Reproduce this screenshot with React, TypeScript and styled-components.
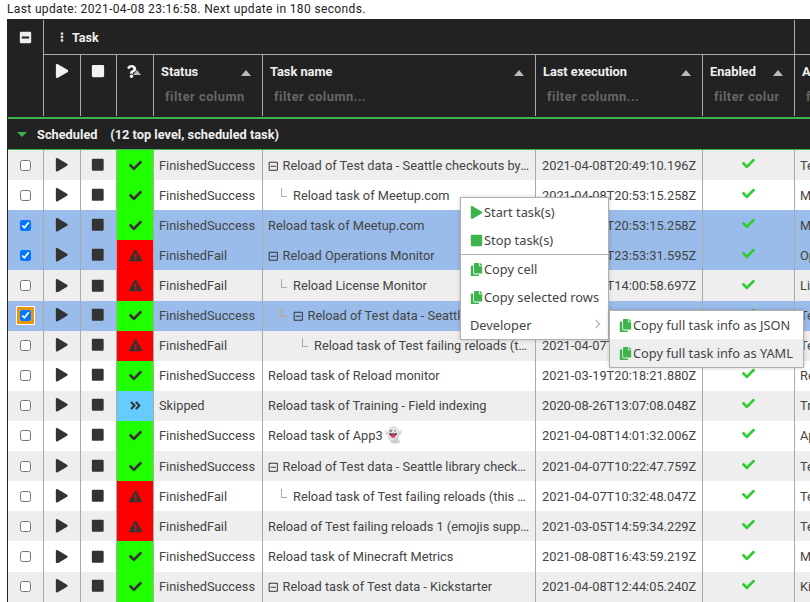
import React from 'react'
import styled, { createGlobalStyle } from 'styled-components'
import {
  FaPlay,
  FaStop,
  FaCheck,
  FaExclamationTriangle,
  FaAngleDoubleRight,
  FaCopy,
  FaRegMinusSquare,
  FaMinusSquare,
  FaQuestion,
  FaEllipsisV,
  FaSquare,
} from 'react-icons/fa'

const COLUMNS = '36px 37px 36px 37px 109px 273px 167px 92px 200px'
const GREEN = '#3cb44b'

const GlobalStyle = createGlobalStyle`
  html, body {
    margin: 0;
    height: 602px;
    overflow: hidden;
    background: #fff;
  }
  body {
    font-family: Roboto, "Liberation Sans", sans-serif;
    color: #333;
  }
`

const Page = styled.div`
  position: relative;
  width: 810px;
  height: 602px;
  overflow: hidden;
  padding-left: 7px;
  box-sizing: border-box;
`

const UpdateLine = styled.div`
  height: 19px;
  line-height: 19px;
  font-size: 12px;
  letter-spacing: 0.36px;
  white-space: nowrap;
  color: #222;
`

const Table = styled.div`
  width: 1000px;
  border-left: 1px solid #222;
`

const Header = styled.div`
  display: grid;
  grid-template-columns: ${COLUMNS};
  grid-template-rows: 35px 61px;
  padding: 1px 0;
  background: #222;
  border-bottom: 2px solid ${GREEN};
  color: #efefef;
`

const CornerCell = styled.div`
  grid-row: 1 / 3;
  border-right: 1px solid #aaa;
  display: flex;
  justify-content: center;
  padding-top: 11px;
  padding-right: 1px;
  font-size: 13px;
  color: #eee;
`

const GroupTitle = styled.div<{ $span: string }>`
  grid-column: ${(p) => p.$span};
  border-bottom: 1px solid #aaa;
  border-right: 1px solid #aaa;
  display: flex;
  align-items: center;
  gap: 5px;
  padding-left: 13px;
  font-size: 12.5px;
  font-weight: 700;
  svg {
    font-size: 10px;
    color: #ddd;
  }
`

const HeadCell = styled.div`
  position: relative;
  border-right: 1px solid #aaa;
  padding: 10px 11px 0 7px;
  box-sizing: border-box;
  min-width: 0;
`

const IconHead = styled.div`
  position: relative;
  border-right: 1px solid #aaa;
  display: flex;
  justify-content: center;
  padding-top: 9px;
  padding-right: 1px;
  height: 61px;
  box-sizing: border-box;
  color: #f2f2f2;
  font-size: 14px;
`

const QuestionHead = styled(IconHead)`
  justify-content: flex-start;
  padding-left: 8px;
  padding-top: 10px;
  font-size: 13px;
`

const HeadTitle = styled.div`
  font-size: 12.8px;
  font-weight: 700;
  line-height: 14px;
  white-space: nowrap;
`

const SortArrow = styled.span`
  position: absolute;
  top: 15px;
  right: 11px;
  width: 0;
  height: 0;
  border-left: 5.5px solid transparent;
  border-right: 5.5px solid transparent;
  border-bottom: 6px solid #bbb;
`

const QuestionArrow = styled(SortArrow)`
  right: auto;
  left: 16px;
  border-left-width: 4.5px;
  border-right-width: 4.5px;
  border-bottom-width: 5px;
`

const Filter = styled.input`
  display: block;
  width: 100%;
  margin: 5px 0 0;
  padding: 0 4px;
  box-sizing: border-box;
  height: 24px;
  border: 0;
  background: transparent;
  font: 700 12.8px Roboto, sans-serif;
  letter-spacing: 0.5px;
  color: #ccc;
  &::placeholder {
    color: #666;
    opacity: 1;
  }
`

const GroupRow = styled.div`
  height: 30px;
  background: #222;
  border-bottom: 1px solid ${GREEN};
  display: flex;
  align-items: center;
  padding-left: 9px;
  font-size: 12.8px;
  font-weight: 700;
  color: #efefef;
  white-space: pre;
`

const GroupArrow = styled.span`
  width: 0;
  height: 0;
  margin-right: 10px;
  border-top: 5px solid ${GREEN};
  border-left: 5px solid transparent;
  border-right: 5px solid transparent;
`

const Row = styled.div<{ $bg: string; $tall?: boolean; $lift?: boolean }>`
  --lift: ${(p) => (p.$lift ? 2 : 0)}px;
  display: grid;
  grid-template-columns: ${COLUMNS};
  height: ${(p) => (p.$tall ? 31 : 30)}px;
  background: ${(p) => p.$bg};
`

const Cell = styled.div`
  border-right: 1px solid #aaa;
  display: flex;
  align-items: center;
  min-width: 0;
  padding: 0 5px var(--lift);
  font-size: 12.8px;
  color: #444;
  white-space: nowrap;
  overflow: hidden;
`

const CenterCell = styled(Cell)`
  justify-content: center;
  padding: 0 1px var(--lift) 0;
`

const IconCell = styled(CenterCell)`
  color: #333;
  font-size: 13.5px;
`

const StatusCell = styled(CenterCell)<{ $bg: string }>`
  background: ${(p) => p.$bg};
  color: #333;
  font-size: 13px;
  padding: 0 0 var(--lift);
`

const EnabledCell = styled(CenterCell)`
  color: #2ecc2e;
  font-size: 13px;
  padding-bottom: calc(3px + var(--lift));
`

const DateCell = styled(Cell)`
  padding-left: 6px;
`

const Check = styled.input<{ $focused?: boolean }>`
  margin: 0;
  width: 11px;
  height: 11px;
  ${(p) =>
    p.$focused
      ? 'box-shadow: 0 0 0 3px #e8960c, 0 0 0 4px #fff; border-radius: 3px;'
      : ''}
`

const NameWrap = styled.div<{ $indent: number }>`
  display: flex;
  align-items: center;
  min-width: 0;
  margin-left: ${(p) => p.$indent}px;
`

const NameText = styled.span`
  overflow: hidden;
  text-overflow: ellipsis;
  white-space: nowrap;
  min-width: 0;
`

const Branch = styled.span<{ $color: string }>`
  flex: none;
  width: 5px;
  height: 8px;
  margin: -5px 6px 0 0;
  border-left: 1px solid ${(p) => p.$color};
  border-bottom: 1px solid ${(p) => p.$color};
`

const TreeToggle = styled.span`
  flex: none;
  display: inline-flex;
  margin-right: 4px;
  font-size: 10.5px;
  color: #333;
  padding-top: 2px;
`

const Menu = styled.div<{ $left: number; $top: number; $width: number }>`
  position: absolute;
  left: ${(p) => p.$left}px;
  top: ${(p) => p.$top}px;
  width: ${(p) => p.$width}px;
  box-sizing: border-box;
  background: #fff;
  border: 1px solid #b0b0b0;
  box-shadow: 0 0 4px rgba(0, 0, 0, 0.2);
  font-family: "Noto Sans", sans-serif;
  font-size: 12.8px;
  color: #444;
`

const MenuItem = styled.div<{ $hover?: boolean }>`
  position: relative;
  height: 28px;
  display: flex;
  align-items: center;
  padding-left: 9px;
  white-space: nowrap;
  background: ${(p) => (p.$hover ? '#eee' : 'transparent')};
  svg {
    flex: none;
    color: ${GREEN};
    font-size: 13px;
    margin-right: 1px;
  }
`

const MenuDivider = styled.div`
  height: 1px;
  background: #b0b0b0;
`

const Chevron = styled.span`
  position: absolute;
  right: 9px;
  top: 10px;
  width: 5px;
  height: 5px;
  border-top: 1px solid #aaa;
  border-right: 1px solid #aaa;
  transform: rotate(45deg);
`

const Ghost = styled.span`
  font-family: "Noto Color Emoji", Roboto, sans-serif;
  font-size: 15px;
  margin-left: 2px;
`

type Task = {
  status: 'ok' | 'fail' | 'skip'
  name: string
  level?: number
  toggle?: boolean
  date: string
  app: string
  selected?: boolean
  focused?: boolean
  grey?: boolean
  tall?: boolean
  lift?: boolean
  ghost?: boolean
}

const tasks: Task[] = [
  { status: 'ok', name: 'Reload of Test data - Seattle checkouts by title', toggle: true, date: '2021-04-08T20:49:10.196Z', app: 'Test data', grey: true },
  { status: 'ok', name: 'Reload task of Meetup.com', level: 1, date: '2021-04-08T20:53:15.258Z', app: 'Meetup.com' },
  { status: 'ok', name: 'Reload task of Meetup.com', date: '2021-04-08T20:53:15.258Z', app: 'Meetup.com', selected: true },
  { status: 'fail', name: 'Reload Operations Monitor', toggle: true, date: '2021-04-08T23:53:31.595Z', app: 'Operations', selected: true },
  { status: 'fail', name: 'Reload License Monitor', level: 1, date: '2021-04-08T14:00:58.697Z', app: 'License', grey: true, tall: true },
  { status: 'ok', name: 'Reload of Test data - Seattle library checkouts', level: 1, toggle: true, date: '2021-04-08T20:49:10.196Z', app: 'Test data', selected: true, focused: true, lift: true },
  { status: 'fail', name: 'Reload task of Test failing reloads (this one will fail)', level: 2, date: '2021-04-07T10:32:48.047Z', app: 'Test', grey: true, lift: true },
  { status: 'ok', name: 'Reload task of Reload monitor', date: '2021-03-19T20:18:21.880Z', app: 'Reload', lift: true },
  { status: 'skip', name: 'Reload task of Training - Field indexing', date: '2020-08-26T13:07:08.048Z', app: 'Training', grey: true, lift: true },
  { status: 'ok', name: 'Reload task of App3', ghost: true, date: '2021-04-08T14:01:32.006Z', app: 'App3', lift: true },
  { status: 'ok', name: 'Reload of Test data - Seattle library checkouts', toggle: true, date: '2021-04-07T10:22:47.759Z', app: 'Test data', grey: true },
  { status: 'fail', name: 'Reload task of Test failing reloads (this one will fail)', level: 1, date: '2021-04-07T10:32:48.047Z', app: 'Test' },
  { status: 'fail', name: 'Reload of Test failing reloads 1 (emojis supported)', date: '2021-03-05T14:59:34.229Z', app: 'Test', grey: true },
  { status: 'ok', name: 'Reload task of Minecraft Metrics', date: '2021-08-08T16:43:59.219Z', app: 'Minecraft', tall: true },
  { status: 'ok', name: 'Reload task of Test data - Kickstarter', toggle: true, date: '2021-04-08T12:44:05.240Z', app: 'Kickstarter', grey: true, lift: true },
]

const statusLabel = { ok: 'FinishedSuccess', fail: 'FinishedFail', skip: 'Skipped' }
const statusColor = { ok: '#1fff00', fail: '#ff0000', skip: '#66ccff' }

function StatusIcon({ status }: { status: Task['status'] }) {
  if (status === 'ok') return <FaCheck />
  if (status === 'fail') return <FaExclamationTriangle />
  return <FaAngleDoubleRight />
}

function TaskRow({ task }: { task: Task }) {
  const bg = task.selected ? '#9abcea' : task.grey ? '#eeeeee' : '#ffffff'
  const level = task.level || 0
  return (
    <Row $bg={bg} $tall={task.tall} $lift={task.lift}>
      <CenterCell>
        <Check type="checkbox" checked={!!task.selected} readOnly $focused={task.focused} />
      </CenterCell>
      <IconCell><FaPlay /></IconCell>
      <IconCell><FaStop /></IconCell>
      <StatusCell $bg={statusColor[task.status]}><StatusIcon status={task.status} /></StatusCell>
      <Cell>{statusLabel[task.status]}</Cell>
      <Cell>
        <NameWrap $indent={level === 0 ? 0 : level === 1 ? 13 : 34}>
          {level > 0 && <Branch $color={task.selected ? '#c9a36a' : '#aaa'} />}
          {task.toggle && <TreeToggle><FaRegMinusSquare /></TreeToggle>}
          <NameText>{task.name}</NameText>
          {task.ghost && <Ghost>👻</Ghost>}
        </NameWrap>
      </Cell>
      <DateCell>{task.date}</DateCell>
      <EnabledCell><FaCheck /></EnabledCell>
      <Cell>{task.app}</Cell>
    </Row>
  )
}

function TitleCell({ title, placeholder }: { title: string; placeholder: string }) {
  return (
    <HeadCell>
      <HeadTitle>{title}</HeadTitle>
      <SortArrow />
      <Filter placeholder={placeholder} readOnly />
    </HeadCell>
  )
}

export default function App() {
  return (
    <Page>
      <GlobalStyle />
      <UpdateLine>Last update: 2021-04-08 23:16:58. Next update in 180 seconds.</UpdateLine>
      <Table>
        <Header>
          <CornerCell><FaMinusSquare /></CornerCell>
          <GroupTitle $span="2 / 9"><FaEllipsisV />Task</GroupTitle>
          <GroupTitle $span="9 / 10" />
          <IconHead><FaPlay /></IconHead>
          <IconHead><FaStop /></IconHead>
          <QuestionHead>
            <FaQuestion />
            <QuestionArrow />
          </QuestionHead>
          <TitleCell title="Status" placeholder="filter column" />
          <TitleCell title="Task name" placeholder="filter column..." />
          <TitleCell title="Last execution" placeholder="filter column..." />
          <TitleCell title="Enabled" placeholder="filter column..." />
          <TitleCell title="App name" placeholder="filter column..." />
        </Header>
        <GroupRow>
          <GroupArrow />
          {'Scheduled    (12 top level, scheduled task)'}
        </GroupRow>
        {tasks.map((t, i) => <TaskRow key={i} task={t} />)}
      </Table>

      <Menu $left={460} $top={197} $width={149}>
        <MenuItem><FaPlay />Start task(s)</MenuItem>
        <MenuItem><FaSquare />Stop task(s)</MenuItem>
        <MenuDivider />
        <MenuItem><FaCopy />Copy cell</MenuItem>
        <MenuItem><FaCopy />Copy selected rows</MenuItem>
        <MenuItem>Developer<Chevron /></MenuItem>
      </Menu>
      <Menu $left={609} $top={310} $width={195}>
        <MenuItem><FaCopy />Copy full task info as JSON</MenuItem>
        <MenuItem $hover><FaCopy />Copy full task info as YAML</MenuItem>
      </Menu>
    </Page>
  )
}
